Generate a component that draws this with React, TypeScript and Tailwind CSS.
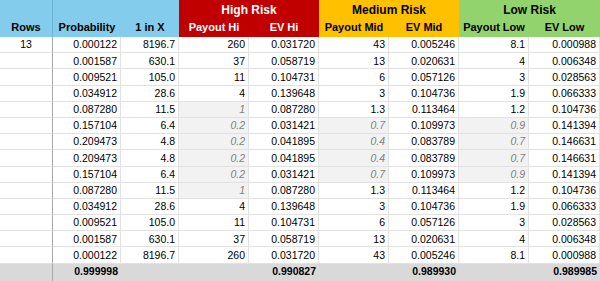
import React from "react";

type Row = {
  rows?: string;
  prob: string;
  oneIn: string;
  pHi: string;
  evHi: string;
  pMid: string;
  evMid: string;
  pLow: string;
  evLow: string;
  dimHi?: boolean;
  dimMid?: boolean;
  dimLow?: boolean;
};

const data: Row[] = [
  { rows: "13", prob: "0.000122", oneIn: "8196.7", pHi: "260", evHi: "0.031720", pMid: "43", evMid: "0.005246", pLow: "8.1", evLow: "0.000988" },
  { prob: "0.001587", oneIn: "630.1", pHi: "37", evHi: "0.058719", pMid: "13", evMid: "0.020631", pLow: "4", evLow: "0.006348" },
  { prob: "0.009521", oneIn: "105.0", pHi: "11", evHi: "0.104731", pMid: "6", evMid: "0.057126", pLow: "3", evLow: "0.028563" },
  { prob: "0.034912", oneIn: "28.6", pHi: "4", evHi: "0.139648", pMid: "3", evMid: "0.104736", pLow: "1.9", evLow: "0.066333" },
  { prob: "0.087280", oneIn: "11.5", pHi: "1", evHi: "0.087280", pMid: "1.3", evMid: "0.113464", pLow: "1.2", evLow: "0.104736", dimHi: true },
  { prob: "0.157104", oneIn: "6.4", pHi: "0.2", evHi: "0.031421", pMid: "0.7", evMid: "0.109973", pLow: "0.9", evLow: "0.141394", dimHi: true, dimMid: true, dimLow: true },
  { prob: "0.209473", oneIn: "4.8", pHi: "0.2", evHi: "0.041895", pMid: "0.4", evMid: "0.083789", pLow: "0.7", evLow: "0.146631", dimHi: true, dimMid: true, dimLow: true },
  { prob: "0.209473", oneIn: "4.8", pHi: "0.2", evHi: "0.041895", pMid: "0.4", evMid: "0.083789", pLow: "0.7", evLow: "0.146631", dimHi: true, dimMid: true, dimLow: true },
  { prob: "0.157104", oneIn: "6.4", pHi: "0.2", evHi: "0.031421", pMid: "0.7", evMid: "0.109973", pLow: "0.9", evLow: "0.141394", dimHi: true, dimMid: true, dimLow: true },
  { prob: "0.087280", oneIn: "11.5", pHi: "1", evHi: "0.087280", pMid: "1.3", evMid: "0.113464", pLow: "1.2", evLow: "0.104736", dimHi: true },
  { prob: "0.034912", oneIn: "28.6", pHi: "4", evHi: "0.139648", pMid: "3", evMid: "0.104736", pLow: "1.9", evLow: "0.066333" },
  { prob: "0.009521", oneIn: "105.0", pHi: "11", evHi: "0.104731", pMid: "6", evMid: "0.057126", pLow: "3", evLow: "0.028563" },
  { prob: "0.001587", oneIn: "630.1", pHi: "37", evHi: "0.058719", pMid: "13", evMid: "0.020631", pLow: "4", evLow: "0.006348" },
  { prob: "0.000122", oneIn: "8196.7", pHi: "260", evHi: "0.031720", pMid: "43", evMid: "0.005246", pLow: "8.1", evLow: "0.000988" },
];

function Cell({ children, dim, center, first }: { children?: React.ReactNode; dim?: boolean; center?: boolean; first?: boolean }) {
  return (
    <div
      className={`flex h-[16.2px] items-center border-b border-[#e2e2e2] px-[3px] text-[10.5px] leading-none ${
        first ? "border-r border-r-[#a8a8a8] justify-center" : "border-r border-r-[#e2e2e2]"
      } ${center ? "justify-center" : "justify-end"} ${dim ? "bg-[#f2f2f2] italic text-[#7f7f7f]" : "bg-white text-black"}`}
    >
      {children}
    </div>
  );
}

export default function App() {
  return (
    <div className="h-[281px] w-[600px] overflow-hidden bg-white font-['Liberation_Sans',Arial,sans-serif]">
      <div className="grid grid-cols-[53px_68px_58px_70px_70px_70px_70px_70px_71px] grid-rows-[18.5px_18.5px] text-[11px] font-bold leading-none">
        <div className="row-span-2 flex items-end justify-center border-r border-[#6fb3d3] bg-[#83cceb] pb-[4px] text-black">Rows</div>
        <div className="row-span-2 flex items-end justify-center bg-[#83cceb] pb-[4px] text-black">Probability</div>
        <div className="row-span-2 flex items-end justify-center bg-[#83cceb] pb-[4px] text-black">1 in X</div>
        <div className="col-span-2 flex items-center justify-center bg-[#c00000] pt-[1px] text-[12px] text-white">High Risk</div>
        <div className="col-span-2 flex items-center justify-center bg-[#ffc000] pt-[1px] text-[12px] text-black">Medium Risk</div>
        <div className="col-span-2 flex items-center justify-center bg-[#92d36e] pt-[1px] text-[12px] text-black">Low Risk</div>
        <div className="flex items-center justify-center bg-[#c00000] text-white">Payout Hi</div>
        <div className="flex items-center justify-center bg-[#c00000] text-white">EV Hi</div>
        <div className="flex items-center justify-center bg-[#ffc000] text-black">Payout Mid</div>
        <div className="flex items-center justify-center bg-[#ffc000] text-black">EV Mid</div>
        <div className="flex items-center justify-center bg-[#92d36e] text-black">Payout Low</div>
        <div className="flex items-center justify-center bg-[#92d36e] text-black">EV Low</div>
      </div>
      <div className="grid grid-cols-[53px_68px_58px_70px_70px_70px_70px_70px_71px]">
        {data.map((r, i) => (
          <React.Fragment key={i}>
            <Cell first center>{r.rows}</Cell>
            <Cell>{r.prob}</Cell>
            <Cell>{r.oneIn}</Cell>
            <Cell dim={r.dimHi}>{r.pHi}</Cell>
            <Cell>{r.evHi}</Cell>
            <Cell dim={r.dimMid}>{r.pMid}</Cell>
            <Cell>{r.evMid}</Cell>
            <Cell dim={r.dimLow}>{r.pLow}</Cell>
            <Cell>{r.evLow}</Cell>
          </React.Fragment>
        ))}
        <div className="h-[17px] border-r border-[#a8a8a8] bg-[#d9d9d9]" />
        <div className="flex h-[17px] items-center justify-end bg-[#d9d9d9] px-[3px] text-[10.5px] font-bold">0.999998</div>
        <div className="h-[17px] bg-[#d9d9d9]" />
        <div className="h-[17px] bg-[#d9d9d9]" />
        <div className="flex h-[17px] items-center justify-end bg-[#d9d9d9] px-[3px] text-[10.5px] font-bold">0.990827</div>
        <div className="h-[17px] bg-[#d9d9d9]" />
        <div className="flex h-[17px] items-center justify-end bg-[#d9d9d9] px-[3px] text-[10.5px] font-bold">0.989930</div>
        <div className="h-[17px] bg-[#d9d9d9]" />
        <div className="flex h-[17px] items-center justify-end bg-[#d9d9d9] px-[3px] text-[10.5px] font-bold">0.989985</div>
      </div>
    </div>
  );
}
